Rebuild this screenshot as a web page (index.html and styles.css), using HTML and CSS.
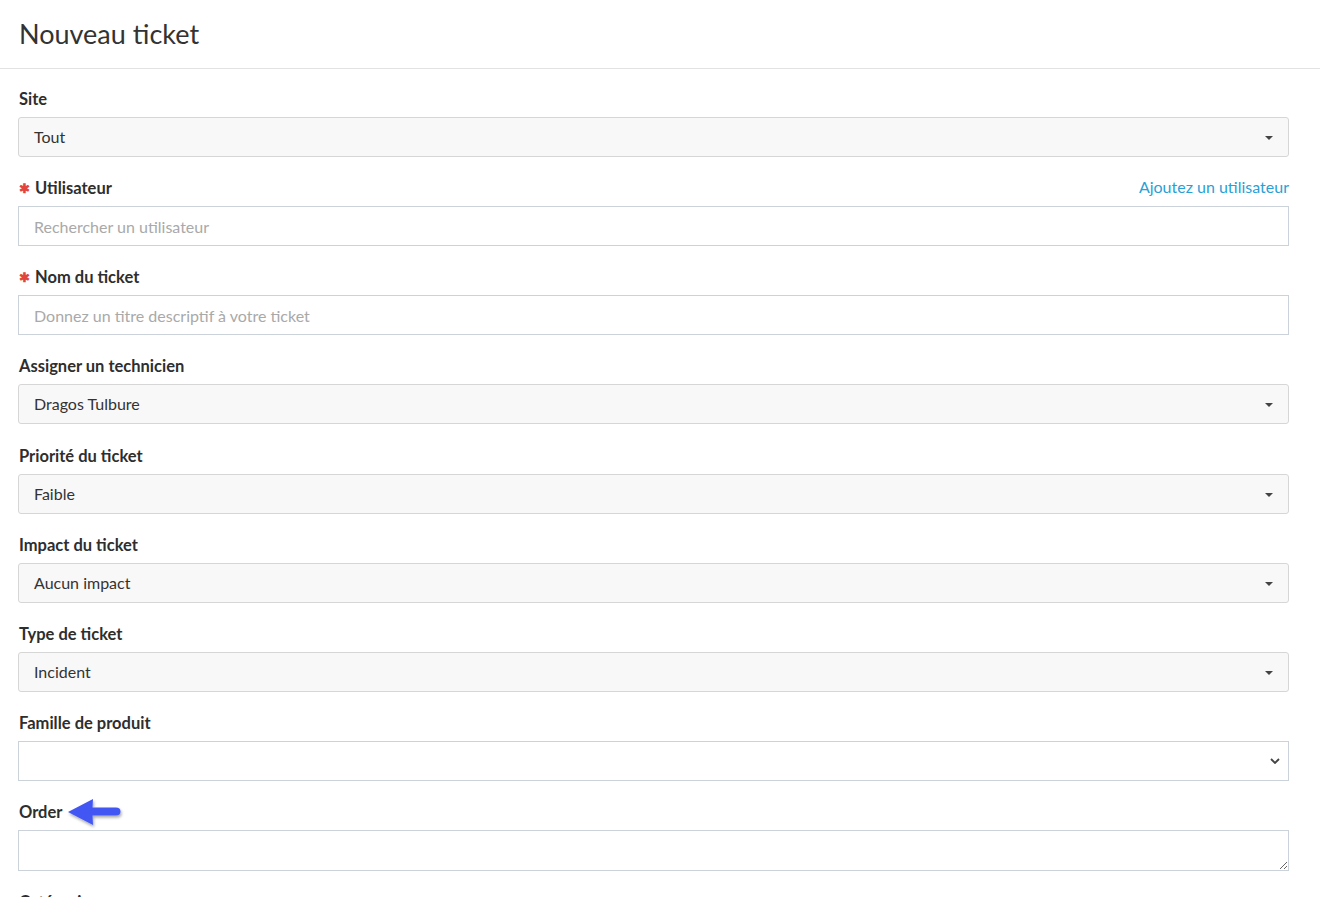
FILE: index.html
```html
<!DOCTYPE html>
<html lang="fr">
<head>
    <meta charset="UTF-8">
    <meta name="viewport" content="width=device-width, initial-scale=1.0">
    <link rel="stylesheet" href="styles.css">
    <title>Nouveau ticket</title>
</head>
<body>

    <div class="page-header">
        <h1>Nouveau ticket</h1>
    </div>

    <form class="ticket-form">

        <div class="field">
            <label class="field-label">Site</label>
            <div class="fake-select"><span>Tout</span><i class="caret"></i></div>
        </div>

        <div class="field">
            <div class="label-row">
                <label class="field-label" for="user"><span class="req">&#10033;</span>Utilisateur</label>
                <a href="#" class="add-link">Ajoutez un utilisateur</a>
            </div>
            <input type="text" id="user" class="text-input" placeholder="Rechercher un utilisateur">
        </div>

        <div class="field">
            <label class="field-label" for="title"><span class="req">&#10033;</span>Nom du ticket</label>
            <input type="text" id="title" class="text-input" placeholder="Donnez un titre descriptif à votre ticket">
        </div>

        <div class="field">
            <label class="field-label">Assigner un technicien</label>
            <div class="fake-select"><span>Dragos Tulbure</span><i class="caret"></i></div>
        </div>

        <div class="field">
            <label class="field-label">Priorité du ticket</label>
            <div class="fake-select"><span>Faible</span><i class="caret"></i></div>
        </div>

        <div class="field">
            <label class="field-label">Impact du ticket</label>
            <div class="fake-select"><span>Aucun impact</span><i class="caret"></i></div>
        </div>

        <div class="field">
            <label class="field-label">Type de ticket</label>
            <div class="fake-select"><span>Incident</span><i class="caret"></i></div>
        </div>

        <div class="field">
            <label class="field-label" for="family">Famille de produit</label>
            <select id="family" class="native-select">
                <option></option>
            </select>
        </div>

        <div class="field">
            <label class="field-label order-label" for="order">Order
                <!-- annotation arrow pointing at the field -->
                <svg class="pointer" width="64" height="38" viewBox="0 0 64 38">
                    <defs>
                        <filter id="shadow" x="-20%" y="-30%" width="150%" height="170%">
                            <feDropShadow dx="1" dy="2" stdDeviation="1.5" flood-color="#000" flood-opacity="0.35"/>
                        </filter>
                    </defs>
                    <path d="M3 17 L28 4 L27.5 12.5 L51 12.5 Q55.5 12.5 55.5 16.5 Q55.5 20.5 51 20.5 L27.5 20.5 L28 30 Z" fill="#4257f4" filter="url(#shadow)"/>
                </svg>
            </label>
            <textarea id="order" class="text-area"></textarea>
        </div>

        <div class="field">
            <label class="field-label">Catégorie</label>
        </div>

    </form>

</body>
</html>
```

FILE: styles.css
```css
body {
    margin: 0;
    font-family: Lato, "Open Sans", sans-serif;
    color: #333;
    background: #fff;
}

.page-header {
    height: 68px;
    border-bottom: 1px solid #e2e2e2;
    padding: 0 19px;
}

.page-header h1 {
    margin: 0;
    padding-top: 17px;
    font-size: 27px;
    font-weight: 400;
    line-height: 34px;
    color: #333;
}

.ticket-form {
    padding: 19px 31px 0 18px;
}

.field {
    margin-bottom: 20.125px;
}

.label-row {
    display: flex;
    justify-content: space-between;
    align-items: center;
}

.field-label {
    display: block;
    font-size: 16.5px;
    font-weight: 700;
    line-height: 20px;
    padding-top: 1px;
    margin: 0 0 8px 1px;
    color: #2e2e2e;
}

.req {
    color: #e2453c;
    font-size: 13px;
    margin-right: 5px;
    vertical-align: 1px;
}

.add-link {
    color: #2a9fd6;
    text-decoration: none;
    font-size: 16px;
    line-height: 20px;
    margin-bottom: 9px;
}

.fake-select {
    position: relative;
    height: 38px;
    border: 1px solid #d6d6d6;
    border-radius: 3px;
    background: #f8f8f8;
    display: flex;
    align-items: center;
    padding: 0 15px;
    font-size: 16px;
    color: #333;
}

.fake-select span {
    margin-top: -1px;
}

.caret {
    position: absolute;
    right: 15px;
    top: 18px;
    border-left: 4px solid transparent;
    border-right: 4px solid transparent;
    border-top: 4px solid #444;
}

.text-input {
    display: block;
    box-sizing: border-box;
    width: 100%;
    height: 40px;
    border: 1px solid #ccd2da;
    border-radius: 0;
    padding: 0 15px;
    font-family: inherit;
    font-size: 16px;
    color: #333;
    outline: none;
}

.text-input::placeholder {
    color: #a9a9a9;
}

.native-select {
    display: block;
    box-sizing: border-box;
    width: 100%;
    height: 40px;
    border: 1px solid #ccd2da;
    border-radius: 0;
    appearance: none;
    background: #fff url("data:image/svg+xml,%3Csvg xmlns='http://www.w3.org/2000/svg' width='10' height='6' viewBox='0 0 10 6'%3E%3Cpath d='M1 1l4 4 4-4' fill='none' stroke='%23444' stroke-width='1.8'/%3E%3C/svg%3E") no-repeat right 8px center;
    font-family: inherit;
    font-size: 16px;
    padding: 0 12px;
}

.order-label {
    position: relative;
}

.pointer {
    position: absolute;
    left: 46px;
    top: -6px;
}

.text-area {
    display: block;
    box-sizing: border-box;
    width: 100%;
    height: 41px;
    border: 1px solid #ccd2da;
    border-radius: 0;
    font-family: inherit;
    font-size: 16px;
    resize: vertical;
}
```
